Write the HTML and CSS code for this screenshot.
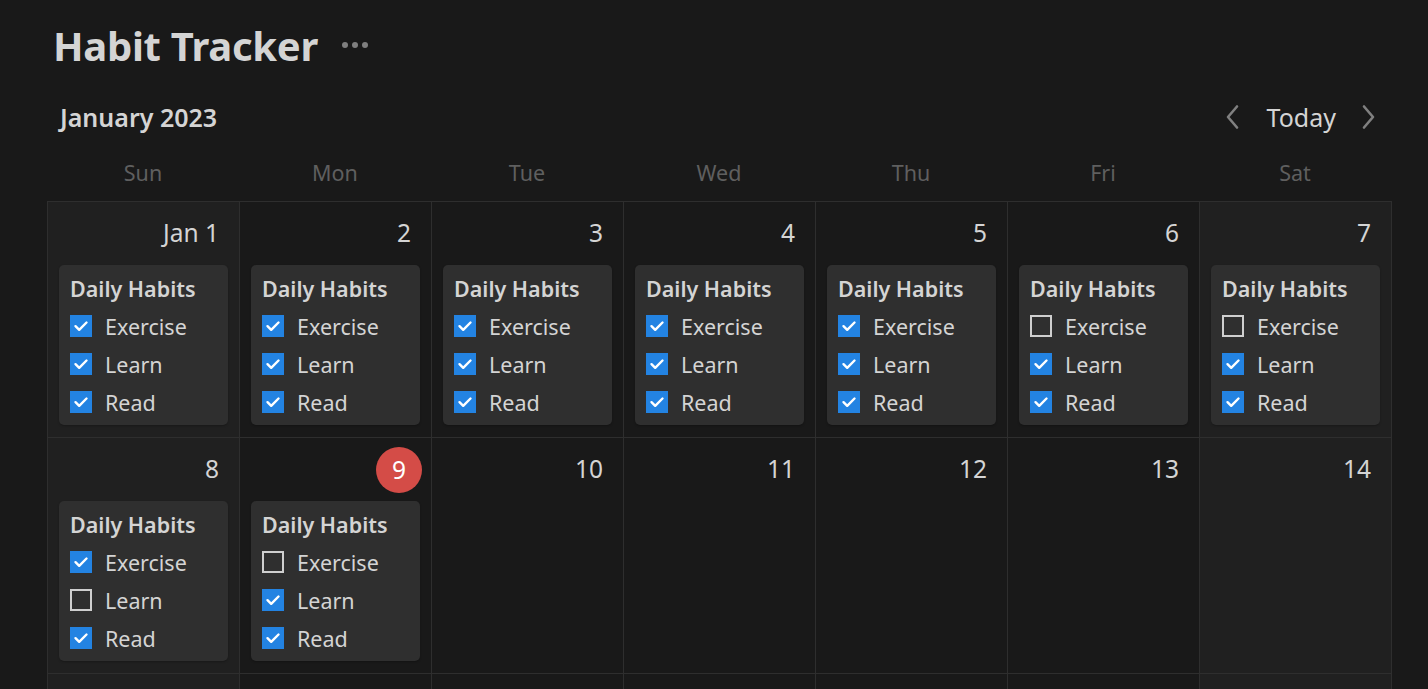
FILE: index.html
```html
<!DOCTYPE html>
<html lang="en">
<head>
<meta charset="utf-8">
<title>Habit Tracker</title>
<link rel="stylesheet" href="styles.css">
</head>
<body>
<div class="page">
  <div class="title-row">
    <h1 class="title">Habit Tracker</h1>
    <span class="more"><i></i><i></i><i></i></span>
  </div>
  <div class="month-row">
    <div class="month">January 2023</div>
    <div class="nav">
      <svg class="chev" width="16" height="26" viewBox="0 0 16 26"><path d="M13 2.5 L4 13 L13 23.5" fill="none" stroke="#808080" stroke-width="2.6" stroke-linecap="round" stroke-linejoin="round"/></svg>
      <span class="today">Today</span>
      <svg class="chev" width="16" height="26" viewBox="0 0 16 26"><path d="M3 2.5 L12 13 L3 23.5" fill="none" stroke="#808080" stroke-width="2.6" stroke-linecap="round" stroke-linejoin="round"/></svg>
    </div>
  </div>
  <div class="weekdays">
    <div>Sun</div><div>Mon</div><div>Tue</div><div>Wed</div><div>Thu</div><div>Fri</div><div>Sat</div>
  </div>
  <div class="grid" id="grid"></div>
</div>
<script src="app.js"></script>
</body>
</html>
```
FILE: app.js
```js
const data = {
  1: [1,1,1], 2: [1,1,1], 3: [1,1,1], 4: [1,1,1], 5: [1,1,1], 6: [0,1,1], 7: [0,1,1],
  8: [1,0,1], 9: [0,1,1]
};
const labels = ["Exercise", "Learn", "Read"];
const check = '<svg width="22" height="22" viewBox="0 0 22 22"><path d="M5.5 11.2 L9.2 14.8 L16.5 7.5" fill="none" stroke="#fff" stroke-width="2.4" stroke-linecap="round" stroke-linejoin="round"/></svg>';
const grid = document.getElementById("grid");
let html = "";
for (let d = 1; d <= 21; d++) {
  const dow = (d - 1) % 7;
  const weekend = dow === 0 || dow === 6;
  let cls = "cell" + (weekend ? " weekend" : "");
  if (d > 14) {
    html += '<div class="' + cls + '"></div>';
    continue;
  }
  const label = d === 1 ? "Jan 1" : String(d);
  let date = d === 9 ? '<span class="num today-badge">9</span>' : '<span class="num">' + label + '</span>';
  let card = "";
  if (data[d]) {
    card = '<div class="card"><div class="card-title">Daily Habits</div>' +
      data[d].map((v, i) => '<div class="habit"><span class="box ' + (v ? "on" : "off") + '">' + (v ? check : "") + '</span><span class="label">' + labels[i] + '</span></div>').join("") +
      '</div>';
  }
  html += '<div class="' + cls + '"><div class="date">' + date + '</div>' + card + '</div>';
}
grid.innerHTML = html;
```
FILE: styles.css
```css
html, body {
  margin: 0;
  padding: 0;
  background: #191919;
  height: 100%;
  overflow: hidden;
}
body {
  font-family: "Noto Sans", "Open Sans", sans-serif;
  color: #d4d4d4;
}
.page {
  padding: 0 37px 0 47px;
}
.title-row {
  height: 92px;
  display: flex;
  align-items: center;
  padding-left: 6px;
}
.title {
  margin: 0;
  font-size: 40px;
  font-weight: 700;
  color: #d4d4d4;
  line-height: 1;
  letter-spacing: -0.3px;
}
.more {
  display: flex;
  gap: 4px;
  margin-left: 24px;
  margin-top: -2px;
}
.more i {
  width: 6px;
  height: 6px;
  border-radius: 50%;
  background: #7f7f7f;
  display: block;
}
.month-row {
  height: 50px;
  display: flex;
  align-items: center;
  justify-content: space-between;
}
.month {
  font-size: 25px;
  font-weight: 600;
  padding-left: 13px;
}
.nav {
  display: flex;
  align-items: center;
  margin-right: 14px;
}
.today {
  font-size: 25px;
  margin: 0 25px 0 27px;
}
.weekdays {
  height: 59px;
  padding-top: 1px;
  box-sizing: border-box;
  display: grid;
  grid-template-columns: repeat(7, 192px);
  align-items: center;
  text-align: center;
  font-size: 21.5px;
  color: #5f5f5f;
}
.grid {
  display: grid;
  grid-template-columns: repeat(7, 192px);
  grid-auto-rows: 236px;
  border-left: 1px solid #2e2e2e;
  border-top: 1px solid #2e2e2e;
  width: max-content;
}
.cell {
  border-right: 1px solid #2e2e2e;
  border-bottom: 1px solid #2e2e2e;
  padding: 8px 11px 0 11px;
  box-sizing: border-box;
}
.cell.weekend {
  background: #202020;
}
.date {
  height: 48px;
  display: flex;
  align-items: center;
  justify-content: flex-end;
  padding-right: 9px;
  font-size: 24.5px;
}
.num {
  line-height: 1;
  margin-top: -2px;
}
.today-badge {
  width: 46px;
  height: 46px;
  margin-top: 0;
  border-radius: 50%;
  background: #d44c47;
  color: #fff;
  display: flex;
  align-items: center;
  justify-content: center;
  margin-right: -11px;
}
.card {
  margin-top: 7px;
  background: #2f2f2f;
  border-radius: 5px;
  padding: 8px 11px 3px 11px;
  box-shadow: 0 1px 2px rgba(0,0,0,0.25);
}
.card-title {
  height: 32px;
  line-height: 32px;
  margin-bottom: 2px;
  font-size: 21.5px;
  font-weight: 600;
  white-space: nowrap;
}
.habit {
  height: 38px;
  display: flex;
  align-items: center;
  font-size: 21.5px;
  white-space: nowrap;
}
.habit:last-child {
  margin-bottom: 1px;
}
.box {
  width: 22px;
  height: 22px;
  box-sizing: border-box;
  flex: none;
  margin-right: 13px;
  display: block;
}
.box svg {
  display: block;
}
.box.on {
  background: #2383e2;
}
.box.off {
  border: 2px solid #cfcfcf;
}
```
